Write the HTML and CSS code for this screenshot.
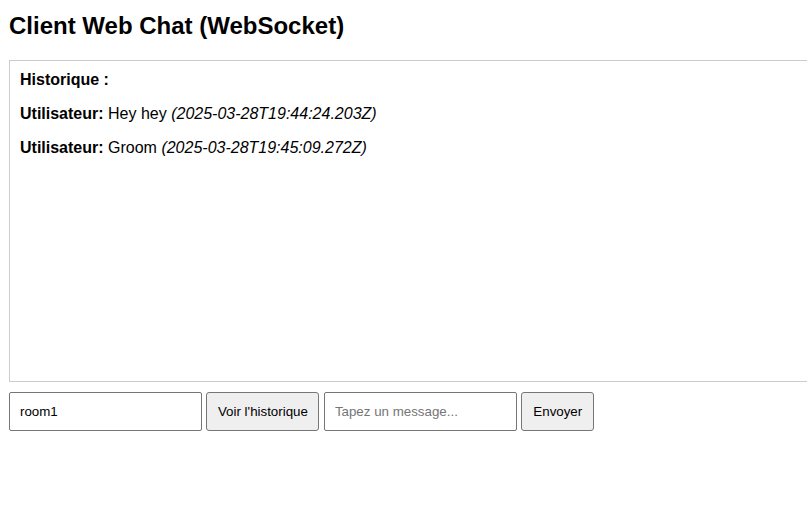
FILE: index.html
```html
<!DOCTYPE html>
<html lang="fr">
<head>
<meta charset="utf-8">
<title>Client Web Chat (WebSocket)</title>
<link rel="stylesheet" href="styles.css">
</head>
<body>
<h1 class="title">Client Web Chat (WebSocket)</h1>
<div class="chat">
  <strong>Historique :</strong>
  <p class="msg"><strong>Utilisateur:</strong> Hey hey <em>(2025-03-28T19:44:24.203Z)</em></p>
  <p class="msg"><strong>Utilisateur:</strong> Groom <em>(2025-03-28T19:45:09.272Z)</em></p>
</div>
<div class="controls">
  <input class="field" type="text" value="room1">
  <button class="btn" type="button">Voir l'historique</button>
  <input class="field" type="text" placeholder="Tapez un message...">
  <button class="btn btn-send" type="button">Envoyer</button>
</div>
</body>
</html>
```
FILE: styles.css
```css
body {
  margin: 0;
  padding: 0 0 0 9px;
  overflow-x: hidden;
  font-family: "Liberation Sans", Arial, sans-serif;
  font-size: 16px;
  color: #000;
  background: #fff;
}
.title {
  font-size: 24px;
  margin: 12px 0 20px;
}
.chat {
  width: 100%;
  height: 300px;
  padding: 10px;
  border: 1px solid #ccc;
  overflow: hidden;
}
.msg {
  margin: 16px 0;
}
.controls {
  margin-top: 10px;
}
.field,
.btn {
  font-family: "Liberation Sans", Arial, sans-serif;
  font-size: 13.33px;
  padding: 11px 10px;
  margin: 0;
  vertical-align: top;
}
.field {
  width: 193px;
  box-sizing: border-box;
  border: 1px solid #767676;
  border-radius: 2px;
  background: #fff;
  color: #000;
}
.field::placeholder {
  color: #757575;
}
.btn {
  padding-left: 10.5px;
  padding-right: 10.5px;
  border: 1px solid #767676;
  border-radius: 3px;
  background: #efefef;
  color: #000;
}
.btn-send {
  padding-left: 11px;
  padding-right: 11px;
}
```
